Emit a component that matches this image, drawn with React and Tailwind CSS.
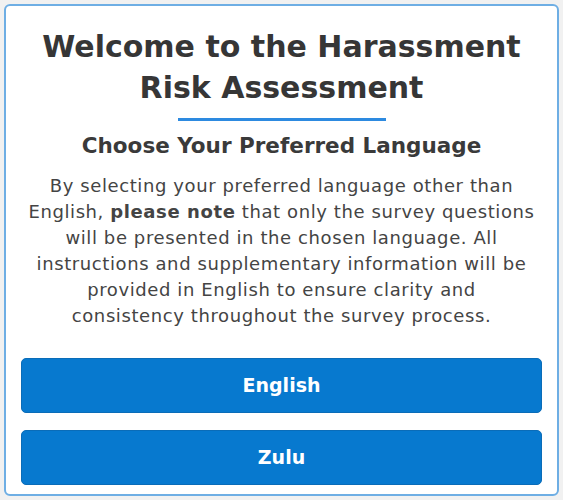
import React from 'react';

const languages = ['English', 'Zulu'];

const App = () => {
  return (
    <div className="min-h-[500px] w-[563px] bg-[#f1f1f1] p-1 font-['DejaVu_Sans',sans-serif]">
      <div className="rounded-md border-2 border-[#6eaee4] bg-white px-[15px] pt-[20px] pb-[9px]">
        <h1 className="px-4 text-center text-[30px] font-bold leading-[41px] text-[#363636]">
          Welcome to the Harassment Risk Assessment
        </h1>
        <div className="mx-auto mt-[10px] h-[3px] w-[208px] bg-[#2d8ae0]" />
        <h2 className="mt-[11px] text-center text-[21.5px] font-bold leading-[28px] text-[#3a3a3a]">
          Choose Your Preferred Language
        </h2>
        <p className="mt-[13px] text-center text-[18px] leading-[26px] tracking-[0.6px] text-[#444]">
          By selecting your preferred language other than
          <br />
          English, <span className="font-bold">please note</span> that only the survey questions
          <br />
          will be presented in the chosen language. All
          <br />
          instructions and supplementary information will be
          <br />
          provided in English to ensure clarity and
          <br />
          consistency throughout the survey process.
        </p>
        <div className="mt-[29px] flex flex-col gap-[17px]">
          {languages.map((lang) => (
            <button
              key={lang}
              type="button"
              className="h-[55px] w-full rounded-[5px] border border-[#0a6cb8] bg-[#0779cf] text-[19px] font-bold text-white"
            >
              {lang}
            </button>
          ))}
        </div>
      </div>
    </div>
  );
};

export default App;
